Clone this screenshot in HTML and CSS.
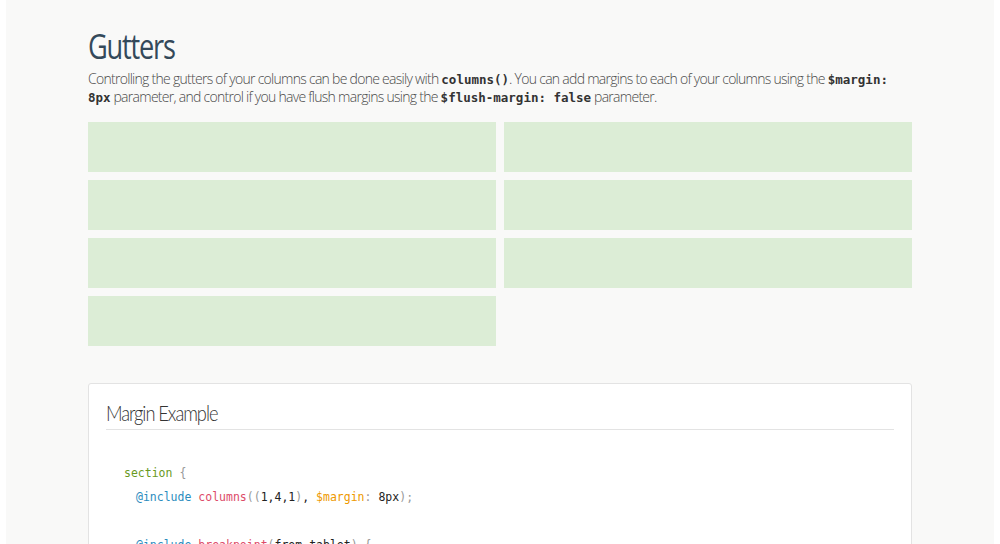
FILE: index.html
```html
<!DOCTYPE html>
<html>
<head>
<meta charset="utf-8">
<link rel="stylesheet" href="styles.css">
</head>
<body>
<div class="page">
  <div class="content">
    <h1 class="title">Gutters</h1>
    <p class="lead">Controlling the gutters of your columns can be done easily with <code>columns()</code>. You can add margins to each of your columns using the <code>$margin: 8px</code> parameter, and control if you have flush margins using the <code>$flush-margin: false</code> parameter.</p>
    <div class="grid">
      <div class="cell"></div>
      <div class="cell"></div>
      <div class="cell"></div>
      <div class="cell"></div>
      <div class="cell"></div>
      <div class="cell"></div>
      <div class="cell"></div>
    </div>
    <div class="card">
      <h2 class="card-title"><span class="card-title-text">Margin Example</span></h2>
      <pre class="code"><span class="l0"><span class="sel">section</span> <span class="pn">{</span></span>
<span class="l1"><span class="kw">@include</span> <span class="fn">columns</span><span class="pn">((</span><span class="num">1,4,1</span><span class="pn">)</span>, <span class="var">$margin</span><span class="pn">:</span> <span class="num">8px</span><span class="pn">);</span></span>

<span class="l1"><span class="kw">@include</span> <span class="fn">breakpoint</span><span class="pn">(</span><span class="num">from-tablet</span><span class="pn">)</span> <span class="pn">{</span></span></pre>
    </div>
  </div>
</div>
</body>
</html>
```
FILE: styles.css
```css
html, body {
  margin: 0;
  padding: 0;
  background: #ffffff;
  height: 544px;
  overflow: hidden;
}
.page {
  margin: 0 6px;
  background: #f9f9f8;
  min-height: 544px;
  padding-top: 24px;
}
.content {
  width: 824px;
  margin: 0 auto;
}
.title {
  margin: 0;
  font-family: "Open Sans", sans-serif;
  font-weight: 400;
  font-size: 34px;
  line-height: 44px;
  letter-spacing: -1.5px;
  color: #34495a;
  transform: scaleX(0.8);
  transform-origin: left center;
}
.lead {
  margin: 2px 0 0;
  font-family: "Open Sans", sans-serif;
  font-weight: 300;
  font-size: 14px;
  line-height: 18px;
  letter-spacing: -0.72px;
  color: #4a4a4a;
}
.lead code {
  font-family: "DejaVu Sans Mono", monospace;
  font-weight: 700;
  font-size: 12.5px;
  line-height: 1;
  letter-spacing: 0;
  color: #333;
}
.grid {
  margin-top: 16px;
  display: grid;
  grid-template-columns: 1fr 1fr;
  gap: 8px;
}
.cell {
  height: 50px;
  background: #dcedd6;
}
.card {
  margin-top: 37px;
  background: #fff;
  border: 1px solid #e3e3e3;
  border-radius: 3px;
  padding: 17px 17px 0;
  height: 200px;
}
.card-title {
  margin: 0;
  font-family: "Lato", sans-serif;
  font-weight: 300;
  font-size: 21px;
  line-height: 24px;
  color: #333;
  padding-bottom: 4px;
  border-bottom: 1px solid #e3e3e3;
}
.card-title-text {
  display: inline-block;
  letter-spacing: -1.2px;
  transform: scaleX(0.87);
  transform-origin: left center;
}
.code {
  margin: 31px 0 0;
  padding-left: 18px;
  font-family: "DejaVu Sans Mono", monospace;
  font-size: 11.5px;
  line-height: 24px;
  color: #222;
}
.l1 { padding-left: 12px; }
.sel { color: #6a9a1f; }
.pn { color: #999; }
.kw { color: #2b8cbe; }
.fn { color: #dd4a68; }
.var { color: #ee9900; }
.num { color: #222; }
```
